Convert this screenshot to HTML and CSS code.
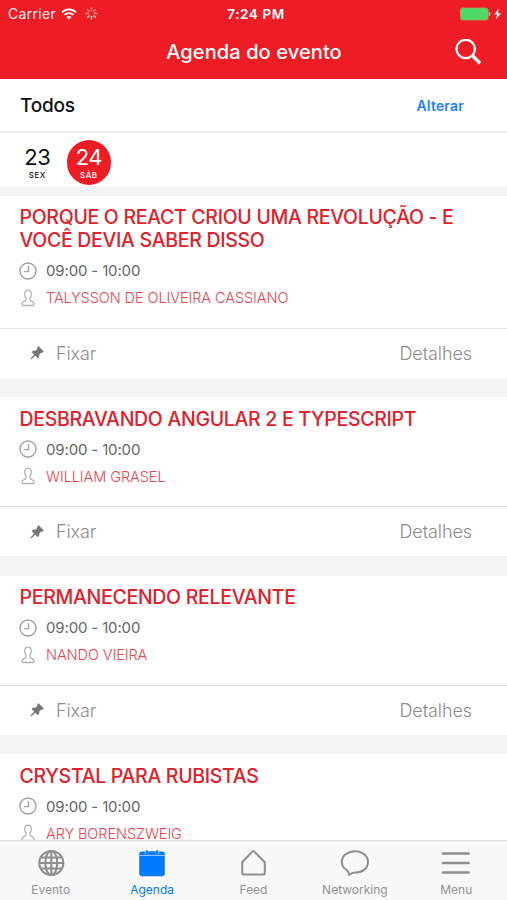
FILE: index.html
```html
<!DOCTYPE html>
<html lang="pt-BR">
<head>
  <meta charset="UTF-8" />
  <meta name="viewport" content="width=device-width, initial-scale=1.0"/>
  <title>Agenda do evento</title>
  <link rel="stylesheet" href="styles.css">
</head>
<body>

<!-- shared icons -->
<svg class="icon-defs" width="0" height="0">
  <symbol id="icon-clock" viewBox="0 0 18 18">
    <circle cx="9" cy="9" r="8" fill="none" stroke="#a3a3a3" stroke-width="1.4"/>
    <path d="M9.5 4V9.6H5.2" fill="none" stroke="#a3a3a3" stroke-width="1.4"/>
  </symbol>
  <symbol id="icon-person" viewBox="0 0 14 18">
    <path d="M7 1.2C4.9 1.2 3.7 2.8 3.7 5C3.7 7.2 4.5 8.5 5.3 9.4C5.3 11.4 4.8 11.8 3.3 12.4C1.7 13 1 13.8 1 15.3C1 16.2 1.4 16.5 2.2 16.5H11.8C12.6 16.5 13 16.2 13 15.3C13 13.8 12.3 13 10.7 12.4C9.2 11.8 8.7 11.4 8.7 9.4C9.5 8.5 10.3 7.2 10.3 5C10.3 2.8 9.1 1.2 7 1.2Z" fill="none" stroke="#b2b2b2" stroke-width="1.3"/>
  </symbol>
  <symbol id="icon-pin" viewBox="0 0 14 14">
    <path d="M8.4 0.8L13.2 5.6L11.9 6.3L10.9 6L8.8 8.1C9.1 9.4 8.8 10.6 8 11.5L5.3 8.9L1.4 12.7L1.2 12.5L4.9 8.5L2.3 5.9C3.3 5.1 4.6 4.9 5.8 5.2L7.9 3.1L7.7 2Z" fill="#777" stroke="#777" stroke-width="1.1" stroke-linejoin="round"/>
  </symbol>
</svg>

<header class="header">
  <div class="status-bar">
    <div class="status-left">
      <span class="carrier">Carrier</span>
      <svg class="wifi" width="16" height="12" viewBox="0 0 16 12" fill="none" stroke="#fff" stroke-width="1.8">
        <path d="M1 4.3C5 0.3 11 0.3 15 4.3"/>
        <path d="M3.5 6.9C6 4.4 10 4.4 12.5 6.9"/>
        <path d="M8 11.5L5.5 8.9C7 7.6 9 7.6 10.5 8.9Z" fill="#fff" stroke="none"/>
      </svg>
      <svg class="spinner" width="13" height="13" viewBox="0 0 13 13" stroke="#fff" stroke-width="1.3" stroke-linecap="round">
        <path d="M6.5 1V3.6" opacity="0.5"/>
        <path d="M10.4 2.6L8.6 4.4" opacity="0.5"/>
        <path d="M12 6.5H9.4" opacity="0.6"/>
        <path d="M10.4 10.4L8.6 8.6" opacity="0.8"/>
        <path d="M6.5 12V9.4"/>
        <path d="M2.6 10.4L4.4 8.6" opacity="0.9"/>
        <path d="M1 6.5H3.6" opacity="0.6"/>
        <path d="M2.6 2.6L4.4 4.4" opacity="0.5"/>
      </svg>
    </div>
    <div class="status-time">7:24 PM</div>
    <div class="status-right">
      <svg width="42" height="14" viewBox="0 0 42 14">
        <rect x="0.5" y="1" width="27.5" height="12" rx="1.8" fill="#4cd964" stroke="#a9a35a" stroke-width="0.8"/>
        <path d="M29 5V9C30.6 8.6 30.6 5.4 29 5Z" fill="#fff"/>
        <path d="M38.6 1.5L34.4 7.6H37.2L36 12.6L41 6.2H38Z" fill="#fff"/>
      </svg>
    </div>
  </div>
  <div class="nav-bar">
    <h1>Agenda do evento</h1>
    <svg class="search" width="27" height="27" viewBox="0 0 27 27" fill="none" stroke="#fff">
      <circle cx="10.7" cy="10" r="9.2" stroke-width="2.3"/>
      <path d="M17.2 16.5L25 24.3" stroke-width="3.4"/>
    </svg>
  </div>
</header>

<div class="filter">
  <h2>Todos</h2>
  <a class="change">Alterar</a>
</div>

<div class="days">
  <div class="day">
    <span class="day-number">23</span>
    <span class="day-name">SEX</span>
  </div>
  <div class="day active">
    <span class="day-number">24</span>
    <span class="day-name">SÁB</span>
  </div>
</div>

<main class="sessions">
  <article class="session">
    <div class="session-info">
      <h3>PORQUE O REACT CRIOU UMA REVOLUÇÃO - E<br>VOCÊ DEVIA SABER DISSO</h3>
      <div class="meta time"><svg width="18" height="18"><use href="#icon-clock"/></svg><span>09:00 - 10:00</span></div>
      <div class="meta speaker"><svg width="18" height="18"><use href="#icon-person"/></svg><span>TALYSSON DE OLIVEIRA CASSIANO</span></div>
    </div>
    <div class="actions">
      <a class="pin"><svg width="14" height="14"><use href="#icon-pin"/></svg>Fixar</a>
      <a>Detalhes</a>
    </div>
  </article>

  <article class="session">
    <div class="session-info">
      <h3>DESBRAVANDO ANGULAR 2 E TYPESCRIPT</h3>
      <div class="meta time"><svg width="18" height="18"><use href="#icon-clock"/></svg><span>09:00 - 10:00</span></div>
      <div class="meta speaker"><svg width="18" height="18"><use href="#icon-person"/></svg><span>WILLIAM GRASEL</span></div>
    </div>
    <div class="actions">
      <a class="pin"><svg width="14" height="14"><use href="#icon-pin"/></svg>Fixar</a>
      <a>Detalhes</a>
    </div>
  </article>

  <article class="session">
    <div class="session-info">
      <h3>PERMANECENDO RELEVANTE</h3>
      <div class="meta time"><svg width="18" height="18"><use href="#icon-clock"/></svg><span>09:00 - 10:00</span></div>
      <div class="meta speaker"><svg width="18" height="18"><use href="#icon-person"/></svg><span>NANDO VIEIRA</span></div>
    </div>
    <div class="actions">
      <a class="pin"><svg width="14" height="14"><use href="#icon-pin"/></svg>Fixar</a>
      <a>Detalhes</a>
    </div>
  </article>

  <article class="session">
    <div class="session-info">
      <h3>CRYSTAL PARA RUBISTAS</h3>
      <div class="meta time"><svg width="18" height="18"><use href="#icon-clock"/></svg><span>09:00 - 10:00</span></div>
      <div class="meta speaker"><svg width="18" height="18"><use href="#icon-person"/></svg><span>ARY BORENSZWEIG</span></div>
    </div>
  </article>
</main>

<nav class="tab-bar">
  <a class="tab">
    <svg width="30" height="30" viewBox="0 0 30 30" fill="none" stroke="#8e8e8e" stroke-width="2.1">
      <circle cx="15.3" cy="15" r="12"/>
      <ellipse cx="15.3" cy="15" rx="6" ry="12"/>
      <path d="M15.3 3V27M3.3 15H27.3M5.3 9.5H25.3M5.3 20.5H25.3"/>
    </svg>
    <span>Evento</span>
  </a>
  <a class="tab active">
    <svg width="30" height="30" viewBox="0 0 30 30">
      <rect x="2.2" y="3.5" width="25.6" height="24.7" rx="2.8" fill="#007aff"/>
      <path d="M2.5 7.5H27.5" stroke="#f8f8f8" stroke-width="0.6"/>
      <path d="M9.8 1.8V6.3M20.2 1.8V6.3" stroke="#f8f8f8" stroke-width="3.8"/>
      <path d="M9.8 2.8V6.2M20.2 2.8V6.2M9 4.5H21" stroke="#007aff" stroke-width="1.8" stroke-linecap="round"/>
    </svg>
    <span>Agenda</span>
  </a>
  <a class="tab">
    <svg width="30" height="30" viewBox="0 0 30 30" fill="none" stroke="#8e8e8e" stroke-width="2" stroke-linejoin="round">
      <path d="M4.2 14.2L14.5 3.4Q15.3 2.6 16.1 3.4L26.8 14.2V25.2Q26.8 26.4 25.6 26.4H5.4Q4.2 26.4 4.2 25.2Z"/>
    </svg>
    <span>Feed</span>
  </a>
  <a class="tab">
    <svg width="30" height="30" viewBox="0 0 30 30" fill="none" stroke="#8e8e8e" stroke-width="2" stroke-linejoin="round">
      <path d="M15 3.2C22.4 3.2 28 8 28 14C28 20.2 22.4 24.6 15 24.6C12.5 24.6 11 25.4 9 27C9 25.4 8.4 24 7 22.2C3.8 20.4 1.8 17.6 1.8 14C1.8 8 7.6 3.2 15 3.2Z"/>
    </svg>
    <span>Networking</span>
  </a>
  <a class="tab">
    <svg width="30" height="30" viewBox="0 0 30 30" stroke="#8e8e8e" stroke-width="2.6" stroke-linecap="round">
      <path d="M2 5.5H27.6M2 15H27.6M2 24.5H27.6"/>
    </svg>
    <span>Menu</span>
  </a>
</nav>

</body>
</html>
```
FILE: styles.css
```css
* {
  box-sizing: border-box;
}

body {
  margin: 0;
  height: 900px;
  display: flex;
  flex-direction: column;
  overflow: hidden;
  background: #f4f4f4;
  color: #111;
  font-family: Inter, "Liberation Sans", sans-serif;
}

h1, h2, h3 {
  margin: 0;
  font-weight: 500;
}

svg {
  display: block;
  flex-shrink: 0;
}

.icon-defs {
  height: 0;
}

.header {
  height: 79px;
  flex-shrink: 0;
  background: #ee1d25;
  color: #fff;
}

.status-bar {
  height: 27px;
  padding: 0 5px 0 8px;
  display: grid;
  grid-template-columns: 1fr auto 1fr;
  align-items: center;
  font-size: 14px;
}

.status-left {
  display: flex;
  align-items: center;
}

.carrier {
  opacity: 0.9;
  letter-spacing: 0.3px;
}

.wifi {
  margin-left: 5px;
}

.spinner {
  margin-left: 8px;
}

.status-time {
  padding-left: 2px;
  font-size: 13.5px;
  font-weight: 600;
  letter-spacing: 0.6px;
}

.status-right {
  display: flex;
  justify-content: flex-end;
}

.nav-bar {
  height: 50px;
  padding: 0 25px;
  display: grid;
  grid-template-columns: 1fr auto 1fr;
  align-items: center;
}

.nav-bar h1 {
  grid-column: 2;
  padding-left: 1px;
  font-size: 20px;
  letter-spacing: 0.1px;
}

.search {
  justify-self: end;
}

.filter {
  height: 54px;
  flex-shrink: 0;
  padding: 1px 43px 0 20px;
  display: flex;
  align-items: center;
  justify-content: space-between;
  background: #fff;
  border-bottom: 2px solid #ededed;
}

.filter h2 {
  font-size: 19px;
  letter-spacing: -0.2px;
}

.change {
  color: #1a82f7;
  font-size: 14px;
  font-weight: 600;
  letter-spacing: 0.2px;
}

.days {
  height: 53px;
  flex-shrink: 0;
  padding: 7px 0 0 15px;
  display: flex;
  gap: 7px;
  background: #fff;
}

.day {
  width: 44.5px;
  height: 44.5px;
  padding-top: 5px;
  display: flex;
  flex-direction: column;
  align-items: center;
  border-radius: 50%;
}

.day.active {
  background: #ee1d25;
  color: #fff;
}

.day-number {
  font-size: 22px;
  line-height: 25px;
  letter-spacing: -0.6px;
}

.day-name {
  font-size: 8px;
  line-height: 10px;
  font-weight: 500;
  letter-spacing: 0.4px;
}

.sessions {
  flex: 1;
  min-height: 0;
  margin-top: 9.75px;
  display: flex;
  flex-direction: column;
  gap: 19.5px;
  overflow: hidden;
}

.session {
  flex-shrink: 0;
  background: #fff;
}

.session-info {
  padding: 10.5px 19px 16.25px 19.5px;
}

.session h3 {
  color: #e0202a;
  font-size: 19.5px;
  line-height: 23px;
  letter-spacing: -0.3px;
  white-space: nowrap;
}

.meta {
  height: 27px;
  margin-left: -1px;
  display: flex;
  align-items: center;
  gap: 9.5px;
  font-size: 15px;
}

.time {
  margin-top: 5px;
  color: #666;
  letter-spacing: -0.15px;
}

.speaker {
  color: #e8434c;
  font-size: 14.5px;
  font-weight: 300;
  letter-spacing: -0.08px;
}

.actions {
  height: 50.25px;
  padding: 0 35px 0 30px;
  display: flex;
  align-items: center;
  justify-content: space-between;
  border-top: 1px solid #e2e2e2;
  color: #8c8c8c;
  font-size: 18px;
  font-weight: 300;
  letter-spacing: -0.1px;
}

.pin {
  display: flex;
  align-items: center;
  gap: 12px;
}

.tab-bar {
  height: 60.5px;
  flex-shrink: 0;
  display: grid;
  grid-template-columns: repeat(5, 1fr);
  background: #f8f8f8;
  border-top: 1px solid #dcdcdc;
}

.tab {
  padding-top: 7.5px;
  display: flex;
  flex-direction: column;
  align-items: center;
  color: #929292;
  font-size: 12px;
}

.tab span {
  margin-top: 3.5px;
  line-height: 16px;
}

.tab.active {
  color: #007aff;
}
```
